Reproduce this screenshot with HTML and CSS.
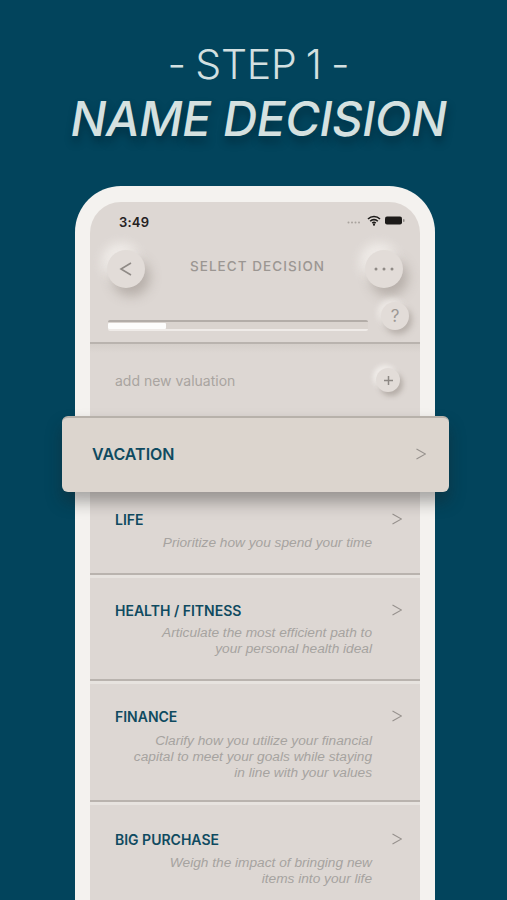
FILE: index.html
```html
<!DOCTYPE html>
<html lang="en">
<head>
<meta charset="utf-8">
<title>Step 1 - Name Decision</title>
<link rel="stylesheet" href="styles.css">
</head>
<body>
<div class="page">
  <header class="hero">
    <div class="step">- STEP 1 -</div>
    <h1 class="headline">NAME DECISION</h1>
  </header>
  <div class="phone">
    <div class="screen">
      <div class="status">
        <span class="time">3:49</span>
        <span class="status-icons">
          <svg class="signal" width="16" height="3" viewBox="0 0 16 3"><g fill="#a9a39e"><circle cx="1.500" cy="1.500" r="1"/><circle cx="5" cy="1.500" r="1"/><circle cx="8.500" cy="1.500" r="1"/><circle cx="12" cy="1.500" r="1"/></g></svg>
          <svg width="14" height="11" viewBox="0 0 14 11"><path d="M1 4a8.500 8.500 0 0 1 12 0M3.200 6.200a5.400 5.400 0 0 1 7.600 0M5.300 8.200a2.500 2.500 0 0 1 3.400 0" fill="none" stroke="#1c1a19" stroke-width="1.600"/><circle cx="7" cy="9.700" r="1.100" fill="#1c1a19"/></svg>
          <svg width="20" height="9" viewBox="0 0 20 9"><rect x="0" y="0.500" width="17" height="8" rx="2" fill="#1c1a19"/><rect x="18" y="3" width="1.500" height="3" rx=".7" fill="#8d8985"/></svg>
        </span>
      </div>
      <div class="nav">
        <button class="knob knob-lg"><svg width="14" height="18" viewBox="0 0 14 18"><path d="M12 3 2 9l10 6" fill="none" stroke="#8f8a86" stroke-width="1.600"/></svg></button>
        <span class="nav-title">SELECT DECISION</span>
        <button class="knob knob-lg"><svg width="22" height="4" viewBox="0 0 22 4"><g fill="#8f8a86"><circle cx="3" cy="2" r="1.500"/><circle cx="11" cy="2" r="1.500"/><circle cx="19" cy="2" r="1.500"/></g></svg></button>
      </div>
      <div class="progress-row">
        <div class="track"><div class="fill"></div></div>
        <button class="knob knob-sm help">?</button>
      </div>
      <div class="add-row">
        <span class="add-label">add new valuation</span>
        <button class="knob knob-xs"><svg width="11" height="11" viewBox="0 0 11 11"><path d="M5.500 1v9M1 5.500h9" stroke="#8d8884" stroke-width="1.500"/></svg></button>
      </div>
      <div class="row-active">
        <span class="active-name">VACATION</span>
        <svg class="chev" width="10" height="12" viewBox="0 0 10 12"><path d="M.5 1 9.500 6 .5 11" fill="none" stroke="#96918d" stroke-width="1.100"/></svg>
      </div>
      <div class="row row-life">
        <div class="row-top"><span class="name">LIFE</span><svg class="chev" width="10" height="12" viewBox="0 0 10 12"><path d="M.5 1 9.500 6 .5 11" fill="none" stroke="#96918d" stroke-width="1.100"/></svg></div>
        <p class="desc">Prioritize how you spend your time</p>
      </div>
      <div class="row row-health">
        <div class="row-top"><span class="name">HEALTH / FITNESS</span><svg class="chev" width="10" height="12" viewBox="0 0 10 12"><path d="M.5 1 9.500 6 .5 11" fill="none" stroke="#96918d" stroke-width="1.100"/></svg></div>
        <p class="desc">Articulate the most efficient path to<br>your personal health ideal</p>
      </div>
      <div class="row row-finance">
        <div class="row-top"><span class="name">FINANCE</span><svg class="chev" width="10" height="12" viewBox="0 0 10 12"><path d="M.5 1 9.500 6 .5 11" fill="none" stroke="#96918d" stroke-width="1.100"/></svg></div>
        <p class="desc">Clarify how you utilize your financial<br>capital to meet your goals while staying<br>in line with your values</p>
      </div>
      <div class="row row-big">
        <div class="row-top"><span class="name">BIG PURCHASE</span><svg class="chev" width="10" height="12" viewBox="0 0 10 12"><path d="M.5 1 9.500 6 .5 11" fill="none" stroke="#96918d" stroke-width="1.100"/></svg></div>
        <p class="desc">Weigh the impact of bringing new<br>items into your life</p>
      </div>
    </div>
  </div>
</div>
</body>
</html>
```
FILE: styles.css
```css
* { box-sizing: border-box; }
html, body { margin: 0; padding: 0; height: 100%; overflow: hidden; }
body { background: #02445c; font-family: Inter, "Liberation Sans", sans-serif; }
.page { width: 507px; height: 900px; overflow: hidden; }

.hero { height: 186px; padding: 39px 0 0 10px; text-align: center; }
.step { font-size: 41px; line-height: 50px; font-weight: 300; color: #d3e0e1; word-spacing: -2px; letter-spacing: -.2px; }
.headline {
  margin: 2px 0 0;
  font-size: 47.500px; line-height: 56px; font-weight: 500; font-style: italic;
  color: #d5e1e0; letter-spacing: -0.4px;
  text-shadow: 1px 6px 8px rgba(0, 20, 30, .4);
}

.phone {
  width: 360px; height: 740px; margin-left: 75px;
  background: #f4f2ef; border-radius: 46px 46px 0 0;
  padding: 16px 15px 0;
}
.screen {
  height: 724px; background: #ddd7d3; border-radius: 31px 31px 0 0;
}
.status { height: 40px; padding: 10px 15px 0 29px; display: flex; justify-content: space-between; align-items: flex-start; }
.time { font-size: 13px; line-height: 20px; font-weight: 600; color: #24211f; letter-spacing: .2px; }
.status-icons { display: flex; align-items: center; gap: 4px; padding-top: 3px; }
.signal { margin-top: 4px; }

.knob {
  border: 0; padding: 0; border-radius: 50%; background: #e2dcd8;
  display: flex; align-items: center; justify-content: center;
  font-family: inherit; flex: none;
}
.knob-lg { width: 38px; height: 38px; box-shadow: 5px 8px 12px rgba(120, 110, 103, .38), -5px -7px 12px rgba(250, 247, 244, .7); }
.knob-sm { width: 28px; height: 28px; box-shadow: 3px 4px 6px rgba(120, 110, 103, .38), -3px -3px 6px rgba(250, 247, 244, .65); }
.knob-xs { width: 24px; height: 24px; box-shadow: 3px 4px 5px rgba(120, 110, 103, .38), -3px -3px 5px rgba(250, 247, 244, .7); }

.nav { height: 48px; padding: 8px 17px 0; display: flex; justify-content: space-between; align-items: flex-start; }
.nav-title { margin: 6px 0 0 5px; font-size: 13.500px; line-height: 20px; font-weight: 500; letter-spacing: 1.050px; color: #9b9692; }

.progress-row { height: 54px; padding: 0 11px 0 18px; display: flex; align-items: flex-start; justify-content: space-between; border-bottom: 2px solid #b9b3ae; }
.track { width: 260px; height: 11px; margin-top: 30px; background: #dad4cf; border-top: 2px solid #b3ada8; border-bottom: 2px solid #efebe8; border-radius: 2px; }
.fill { width: 58px; height: 6px; margin-top: 1px; background: #fdfdfc; border-radius: 1px; }
.help { margin-top: 12px; font-size: 17px; color: #9d9894; }

.add-row { height: 72px; padding: 0 20px 0 25px; display: flex; align-items: center; justify-content: space-between; background: linear-gradient(#d5cfca 0, #ddd7d3 9px); }
.add-label { font-size: 14px; color: #a9a4a0; }

.row-active {
  height: 76px; margin: 0 -29px 0 -28px; padding: 0 23px 2px 30px;
  display: flex; align-items: center; justify-content: space-between;
  background: #dcd5ce; border-radius: 6px; border-top: 2px solid #b7b1aa;
  box-shadow: 0 10px 16px rgba(30, 30, 30, .36);
  position: relative;
}
.active-name { font-size: 16px; font-weight: 600; color: #0f4a60; }

.row { padding: 0 18px 0 25px; border-bottom: 2px solid #b9b3ae; box-shadow: 0 3px 0 #e7e3df; margin-bottom: 3px; }
.row-life { height: 83px; padding-top: 18px; }
.row-health { height: 103px; padding-top: 23px; }
.row-finance { height: 118px; padding-top: 23px; }
.row-big { height: 92px; padding-top: 25px; border-bottom: 0; box-shadow: none; }
.row-top { display: flex; align-items: center; justify-content: space-between; height: 18px; }
.name { font-size: 14px; font-weight: 600; color: #0f4a60; }
.desc {
  margin: 6px 30px 0 0; text-align: right;
  font-family: "Liberation Sans", Arial, sans-serif; font-style: italic;
  font-size: 13.700px; line-height: 16px; color: #a6a3a0;
}
.row-life .desc { margin-top: 7px; }
.row-finance .desc { margin-top: 8px; }
.row-big .desc { margin-top: 7px; }
```
